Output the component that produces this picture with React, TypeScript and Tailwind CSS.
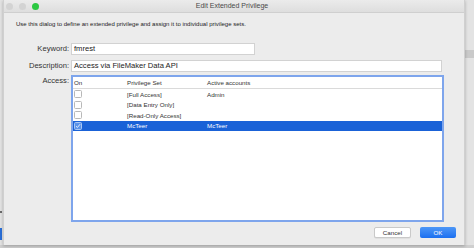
import React from "react";

const rows = [
  { on: false, set: "[Full Access]", accounts: "Admin" },
  { on: false, set: "[Data Entry Only]", accounts: "" },
  { on: false, set: "[Read-Only Access]", accounts: "" },
  { on: true, set: "McTeer", accounts: "McTeer", selected: true },
];

function Checkbox({ checked, selected }: { checked: boolean; selected?: boolean }) {
  return (
    <div
      className={`w-[8px] h-[8px] rounded-[1.5px] border flex items-center justify-center ${
        selected ? "bg-[#5b93ea] border-[#a9c6f3]" : "bg-white border-[#b8b8b8]"
      }`}
    >
      {checked && (
        <svg viewBox="0 0 8 8" className="w-[6px] h-[6px]">
          <path d="M1.3 4.2 L3.2 6 L6.8 1.6" fill="none" stroke="white" strokeWidth="1.1" />
        </svg>
      )}
    </div>
  );
}

export default function App() {
  return (
    <div className="relative w-[474px] h-[248px] bg-[#e3e3e3] overflow-hidden font-['Liberation_Sans',Arial,sans-serif] text-[#2b2b2b]">
      {/* background windows peeking out */}
      <div className="absolute right-0 top-[50px] w-[9px] h-[8px] bg-[#c9c9c9]" />
      <div className="absolute left-0 top-[211px] w-[2px] h-[2px] bg-[#6b6b6b]" />
      <div className="absolute left-0 top-[228px] w-[2px] h-[12px] bg-[#2a6fd8]" />
      <div className="absolute left-0 bottom-0 w-full h-[3px] bg-[#cfcfcf]" />

      {/* dialog */}
      <div className="relative ml-[3px] w-[462px] h-[245px] bg-[#ececec] border-x border-[#d0d0d0] shadow-[0_1px_3px_rgba(0,0,0,0.25)] flex flex-col">
        <div className="relative h-[13px] bg-gradient-to-b from-[#ebebeb] to-[#dedede] border-b border-[#cfcfcf] flex items-center">
          <div className="flex gap-[6px] pl-[2px]">
            <div className="w-[7px] h-[7px] rounded-full bg-[#d3d3d3]" />
            <div className="w-[7px] h-[7px] rounded-full bg-[#d3d3d3]" />
            <div className="w-[7px] h-[7px] rounded-full bg-[#2cc842]" />
          </div>
          <div className="absolute inset-0 flex items-center justify-center pr-[4px] text-[7px] text-[#4a4a4a]">
            Edit Extended Privilege
          </div>
        </div>

        <div className="px-[12px] pt-[7px] flex flex-col">
          <p className="h-[8px] leading-[8px] text-[6px] text-[#222]">
            Use this dialog to define an extended privilege and assign it to individual privilege sets.
          </p>

          <div className="mt-[15px] flex items-center gap-[2px]">
            <div className="w-[53px] text-right text-[7.6px] text-[#333]">Keyword:</div>
            <div className="w-[184px] h-[12px] bg-white border border-[#d2d2d2] flex items-center pl-[2px] text-[7.6px] text-[#222]">
              fmrest
            </div>
          </div>

          <div className="mt-[5px] flex items-center gap-[2px]">
            <div className="w-[53px] text-right text-[7.6px] text-[#333]">Description:</div>
            <div className="w-[371px] h-[12px] bg-white border border-[#d2d2d2] flex items-center pl-[2px] text-[7.6px] text-[#222]">
              Access via FileMaker Data API
            </div>
          </div>

          <div className="mt-[3px] flex items-start gap-[2px]">
            <div className="w-[53px] text-right text-[7.6px] text-[#333]">Access:</div>
            <div className="w-[373px] h-[147px] bg-white border-2 border-[#7ea5ec] flex flex-col">
              <div className="h-[12px] border-b border-[#dadada] grid grid-cols-[53px_80px_1fr] items-center pl-[1px] text-[6.2px] text-[#333]">
                <span>On</span>
                <span>Privilege Set</span>
                <span>Active accounts</span>
              </div>
              {rows.map((r) => (
                <div
                  key={r.set}
                  className={`h-[10.5px] grid grid-cols-[53px_80px_1fr] items-center pl-[1px] text-[6.2px] ${
                    r.selected ? "bg-[#1a62d7] text-white" : "text-[#333]"
                  }`}
                >
                  <Checkbox checked={r.on} selected={r.selected} />
                  <span>{r.set}</span>
                  <span>{r.accounts}</span>
                </div>
              ))}
            </div>
          </div>

          <div className="mt-[5px] -mr-[4px] flex justify-end gap-[9px]">
            <div className="w-[37px] h-[11px] bg-white border border-[#c9c9c9] rounded-[2px] flex items-center justify-center text-[6.2px] text-[#333] shadow-[0_0.5px_0.5px_rgba(0,0,0,0.1)]">
              Cancel
            </div>
            <div className="w-[36px] h-[11px] rounded-[2px] bg-gradient-to-b from-[#4d97f7] to-[#1a6ff0] flex items-center justify-center text-[6.2px] text-white">
              OK
            </div>
          </div>
        </div>
      </div>
    </div>
  );
}
